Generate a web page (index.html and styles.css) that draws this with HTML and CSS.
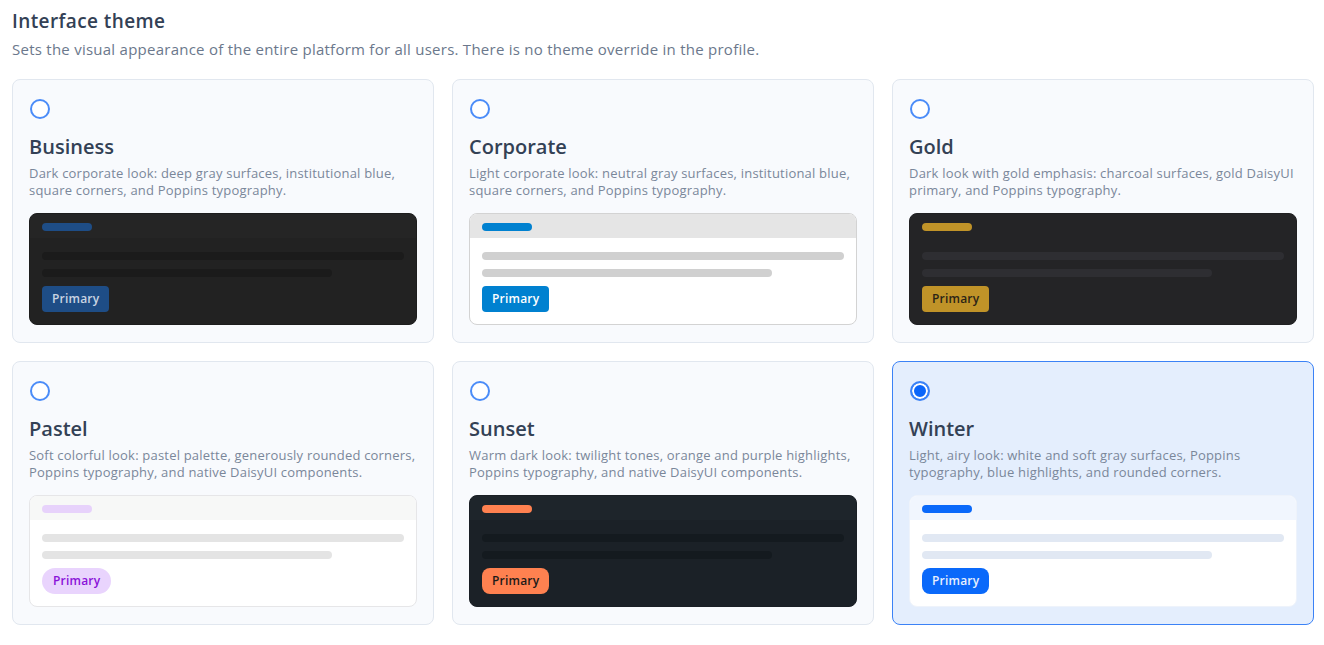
FILE: index.html
```html
<!DOCTYPE html>
<html lang="en">
<head>
    <meta charset="UTF-8">
    <meta name="viewport" content="width=device-width, initial-scale=1.0">
    <title>Interface theme</title>
    <link rel="stylesheet" href="styles.css">
</head>
<body>
    <section class="theme-settings">
        <h2>Interface theme</h2>
        <p class="subtitle">Sets the visual appearance of the entire platform for all users. There is no theme override in the profile.</p>

        <div class="theme-grid">
            <label class="theme-card">
                <input type="radio" name="theme" value="business">
                <span class="theme-name">Business</span>
                <span class="theme-desc">Dark corporate look: deep gray surfaces, institutional blue, square corners, and Poppins typography.</span>
                <div class="preview preview-business">
                    <div class="preview-head"><span class="pill"></span></div>
                    <div class="preview-body">
                        <span class="line"></span>
                        <span class="line short"></span>
                        <span class="btn">Primary</span>
                    </div>
                </div>
            </label>

            <label class="theme-card">
                <input type="radio" name="theme" value="corporate">
                <span class="theme-name">Corporate</span>
                <span class="theme-desc">Light corporate look: neutral gray surfaces, institutional blue, square corners, and Poppins typography.</span>
                <div class="preview preview-corporate">
                    <div class="preview-head"><span class="pill"></span></div>
                    <div class="preview-body">
                        <span class="line"></span>
                        <span class="line short"></span>
                        <span class="btn">Primary</span>
                    </div>
                </div>
            </label>

            <label class="theme-card">
                <input type="radio" name="theme" value="gold">
                <span class="theme-name">Gold</span>
                <span class="theme-desc">Dark look with gold emphasis: charcoal surfaces, gold DaisyUI primary, and Poppins typography.</span>
                <div class="preview preview-gold">
                    <div class="preview-head"><span class="pill"></span></div>
                    <div class="preview-body">
                        <span class="line"></span>
                        <span class="line short"></span>
                        <span class="btn">Primary</span>
                    </div>
                </div>
            </label>

            <label class="theme-card">
                <input type="radio" name="theme" value="pastel">
                <span class="theme-name">Pastel</span>
                <span class="theme-desc">Soft colorful look: pastel palette, generously rounded corners, Poppins typography, and native DaisyUI components.</span>
                <div class="preview preview-pastel">
                    <div class="preview-head"><span class="pill"></span></div>
                    <div class="preview-body">
                        <span class="line"></span>
                        <span class="line short"></span>
                        <span class="btn">Primary</span>
                    </div>
                </div>
            </label>

            <label class="theme-card">
                <input type="radio" name="theme" value="sunset">
                <span class="theme-name">Sunset</span>
                <span class="theme-desc">Warm dark look: twilight tones, orange and purple highlights, Poppins typography, and native DaisyUI components.</span>
                <div class="preview preview-sunset">
                    <div class="preview-head"><span class="pill"></span></div>
                    <div class="preview-body">
                        <span class="line"></span>
                        <span class="line short"></span>
                        <span class="btn">Primary</span>
                    </div>
                </div>
            </label>

            <label class="theme-card selected">
                <input type="radio" name="theme" value="winter" checked>
                <span class="theme-name">Winter</span>
                <span class="theme-desc">Light, airy look: white and soft gray surfaces, Poppins typography, blue highlights, and rounded corners.</span>
                <div class="preview preview-winter">
                    <div class="preview-head"><span class="pill"></span></div>
                    <div class="preview-body">
                        <span class="line"></span>
                        <span class="line short"></span>
                        <span class="btn">Primary</span>
                    </div>
                </div>
            </label>
        </div>
    </section>

    <script>
        // highlight the card of the picked theme
        document.querySelectorAll('.theme-card input').forEach(radio => {
            radio.addEventListener('change', () => {
                document.querySelectorAll('.theme-card').forEach(card => card.classList.remove('selected'));
                radio.closest('.theme-card').classList.add('selected');
            });
        });
    </script>
</body>
</html>
```

FILE: styles.css
```css
* {
    margin: 0;
    padding: 0;
    box-sizing: border-box;
}

body {
    font-family: "Open Sans", "Noto Sans", sans-serif;
    background-color: #ffffff;
    color: #334155;
}

.theme-settings {
    padding: 8px 10px 20px 12px;
}

.theme-settings h2 {
    font-size: 19px;
    font-weight: 600;
    line-height: 26px;
    letter-spacing: 0.4px;
    color: #334155;
}

.subtitle {
    margin-top: 4px;
    font-size: 15px;
    line-height: 22px;
    letter-spacing: 0.25px;
    color: #6b788c;
}

.theme-grid {
    display: grid;
    grid-template-columns: repeat(3, 1fr);
    gap: 18px 18px;
    margin-top: 19px;
}

.theme-card {
    display: flex;
    flex-direction: column;
    background-color: #f8fafd;
    border: 1px solid #e1e7ef;
    border-radius: 8px;
    padding: 19px 16px 17px;
    cursor: pointer;
}

.theme-card.selected {
    background-color: #e4eefd;
    border-color: #3b82f6;
}

.theme-card input[type="radio"] {
    appearance: none;
    width: 20px;
    height: 20px;
    border: 2px solid #4b8cf8;
    border-radius: 50%;
    background-color: #ffffff;
    margin-left: 1px;
    cursor: pointer;
}

.theme-card input[type="radio"]:checked {
    border-color: #3b82f6;
    background-color: #0b66fa;
    box-shadow: inset 0 0 0 2px #ffffff;
}

.theme-name {
    margin-top: 14px;
    font-size: 20px;
    font-weight: 600;
    line-height: 28px;
    color: #334155;
}

.theme-desc {
    margin-top: 4px;
    font-size: 13px;
    line-height: 17px;
    letter-spacing: 0.2px;
    color: #7a879a;
}

.preview {
    margin-top: 14px;
    border-radius: 8px;
    overflow: hidden;
    border: 1px solid transparent;
}

.preview-head {
    padding: 9px 12px 7px;
}

.pill {
    display: block;
    width: 50px;
    height: 8px;
    border-radius: 4px;
}

.preview-body {
    display: flex;
    flex-direction: column;
    align-items: flex-start;
    gap: 9px;
    padding: 14px 12px 12px;
}

.line {
    display: block;
    width: 100%;
    height: 8px;
    border-radius: 4px;
}

.line.short {
    width: 80%;
}

.btn {
    display: inline-block;
    height: 26px;
    line-height: 26px;
    padding: 0 10px;
    font-size: 12px;
    font-weight: 600;
    letter-spacing: 0.2px;
    border-radius: 4px;
}

/* business */
.preview-business {
    background-color: #222222;
    border-color: #1d1d1d;
}
.preview-business .preview-head { background-color: #252525; }
.preview-business .pill { background-color: #1e4d86; }
.preview-business .line { background-color: #1b1b1b; }
.preview-business .btn { background-color: #1e4d86; color: #c9d4e2; }

/* corporate */
.preview-corporate {
    background-color: #ffffff;
    border-color: #d3d3d3;
}
.preview-corporate .preview-head { background-color: #e5e5e5; }
.preview-corporate .pill { background-color: #0081d0; }
.preview-corporate .line { background-color: #d0d0d0; }
.preview-corporate .btn { background-color: #0081d0; color: #ffffff; }

/* gold */
.preview-gold {
    background-color: #242426;
    border-color: #202022;
}
.preview-gold .preview-head { background-color: #242426; }
.preview-gold .pill { background-color: #c09328; }
.preview-gold .line { background-color: #2e2e32; }
.preview-gold .btn { background-color: #c09328; color: #2b2416; }

/* pastel */
.preview-pastel {
    background-color: #ffffff;
    border-color: #e6e6e8;
}
.preview-pastel .preview-head { background-color: #f7f8f7; }
.preview-pastel .pill { background-color: #e7d2fb; }
.preview-pastel .line { background-color: #e4e4e4; }
.preview-pastel .btn { background-color: #e9d4fd; color: #8a12d8; border-radius: 13px; padding: 0 11px; }

/* sunset */
.preview-sunset {
    background-color: #1b2127;
    border-color: #1a1f25;
}
.preview-sunset .preview-head { background-color: #1e252b; }
.preview-sunset .pill { background-color: #ff8150; }
.preview-sunset .line { background-color: #141a1f; }
.preview-sunset .btn { background-color: #ff8150; color: #1c1a18; border-radius: 8px; }

/* winter */
.preview-winter {
    background-color: #ffffff;
    border-color: #eef3fb;
}
.preview-winter .preview-head { background-color: #f1f6fe; }
.preview-winter .pill { background-color: #0a69fa; }
.preview-winter .line { background-color: #e1e8f3; }
.preview-winter .btn { background-color: #0a69fa; color: #e8f0fe; border-radius: 8px; }
```
